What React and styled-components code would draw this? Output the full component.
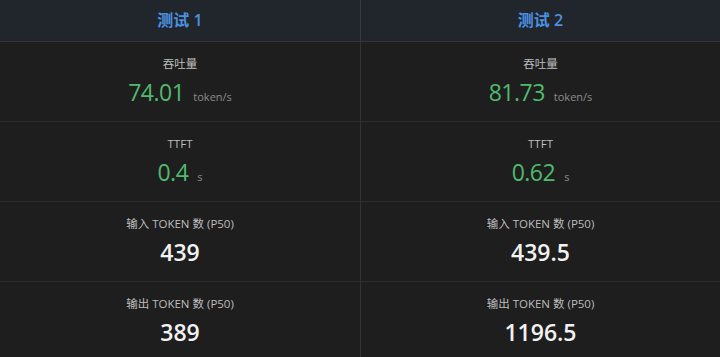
import React from 'react';
import styled, { createGlobalStyle } from 'styled-components';

const GlobalStyle = createGlobalStyle`
  html, body {
    margin: 0;
    padding: 0;
    background: #1e1e1e;
  }
  body {
    font-family: 'Open Sans', 'Noto Sans CJK SC', sans-serif;
  }
`;

const Table = styled.div`
  display: grid;
  grid-template-columns: 361px 1fr;
  width: 720px;
  height: 357px;
  background: #1e1e1e;
  overflow: hidden;
`;

const HeadCell = styled.div`
  height: 42px;
  box-sizing: border-box;
  display: flex;
  align-items: center;
  justify-content: center;
  padding-bottom: 3px;
  background: #20262c;
  border-bottom: 1px solid #33373b;
  border-right: ${(p) => (p.$last ? 'none' : '1px solid #343a40')};
  color: #4d90e0;
  font-size: 16px;
  font-weight: 600;
`;

const Cell = styled.div`
  height: 80px;
  display: flex;
  flex-direction: column;
  align-items: center;
  padding-top: 13px;
  box-sizing: border-box;
  border-bottom: ${(p) => (p.$bottom ? 'none' : '1px solid #2c2c2c')};
  border-right: ${(p) => (p.$last ? 'none' : '1px solid #2f3236')};
`;

const Label = styled.div`
  font-size: 11.5px;
  color: #bdbdbd;
  line-height: 18px;
`;

const ValueRow = styled.div`
  display: flex;
  align-items: baseline;
  gap: 9px;
  margin-top: 4px;
`;

const Value = styled.span`
  font-size: 23px;
  letter-spacing: ${(p) => (p.$green ? '-0.5px' : '0')};
  font-weight: ${(p) => (p.$green ? 500 : 600)};
  color: ${(p) => (p.$green ? '#4fba6d' : '#f2f2f2')};
  line-height: 30px;
`;

const Unit = styled.span`
  font-size: 11px;
  color: #8c8c8c;
`;

const rows = [
  { label: '吞吐量', values: ['74.01', '81.73'], unit: 'token/s', green: true },
  { label: 'TTFT', values: ['0.4', '0.62'], unit: 's', green: true },
  { label: '输入 TOKEN 数 (P50)', values: ['439', '439.5'] },
  { label: '输出 TOKEN 数 (P50)', values: ['389', '1196.5'] },
];

export default function App() {
  return (
    <>
      <GlobalStyle />
      <Table>
        <HeadCell>测试 1</HeadCell>
        <HeadCell $last>测试 2</HeadCell>
        {rows.map((row, i) =>
          row.values.map((v, j) => (
            <Cell key={`${i}-${j}`} $last={j === 1} $bottom={i === rows.length - 1}>
              <Label>{row.label}</Label>
              <ValueRow>
                <Value $green={row.green}>{v}</Value>
                {row.unit && <Unit>{row.unit}</Unit>}
              </ValueRow>
            </Cell>
          ))
        )}
      </Table>
    </>
  );
}
